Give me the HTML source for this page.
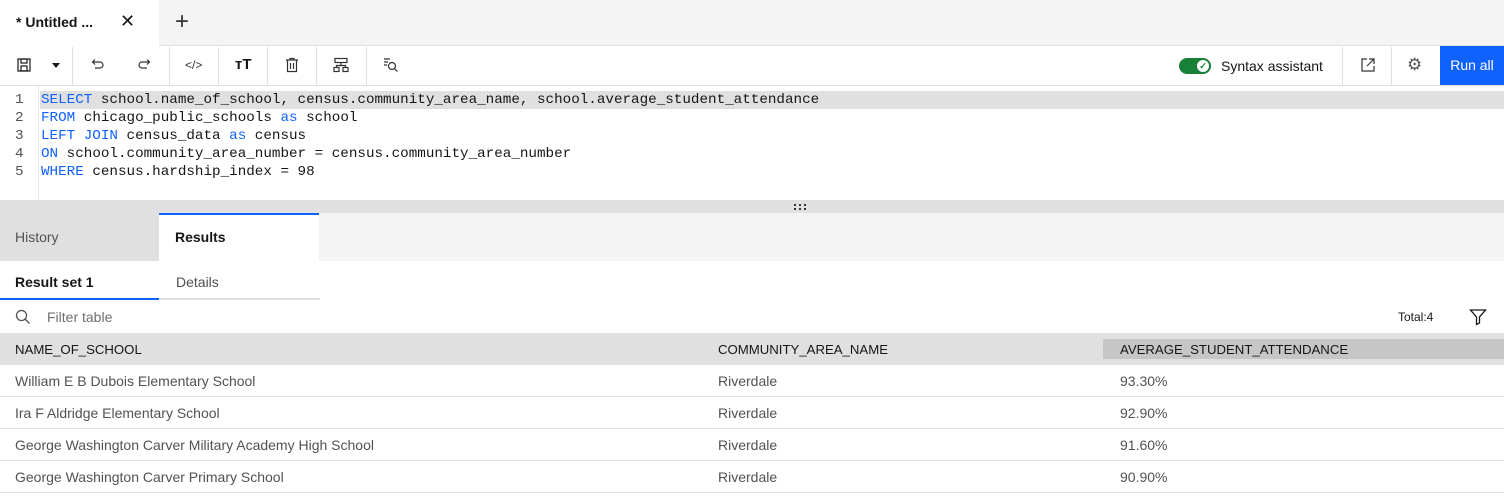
<!DOCTYPE html><html><head><style>
*{margin:0;padding:0;box-sizing:border-box}
body{width:1504px;height:498px;overflow:hidden;background:#fff;font-family:"Liberation Sans",sans-serif;color:#161616;position:relative}
.a{position:absolute}
.mono{font-family:"Liberation Mono",monospace;font-size:14.25px;white-space:pre;color:#161616}
.kw{color:#0f62fe}
.ico{position:absolute;top:57px}
.sep{position:absolute;top:47px;width:1px;height:38px;background:#e0e0e0}
.cell{position:absolute;font-size:14px;color:#525252}
.hd{position:absolute;top:342px;font-size:13.2px;color:#161616}
.row{position:absolute;left:0;width:1504px;height:32px;border-bottom:1px solid #e0e0e0}
</style></head><body>
<div class="a" style="left:0;top:0;width:1504px;height:46px;background:#f4f4f4;border-bottom:1px solid #e0e0e0"></div>
<div class="a" style="left:0;top:0;width:159px;height:46px;background:#fff"></div>
<div class="a" style="left:16px;top:14px;font-size:14px;font-weight:bold">* Untitled ...</div>
<div class="a" style="left:120px;top:11px;font-size:18px">✕</div>
<div class="a" style="left:175px;top:8px;font-size:24px;color:#333">+</div>
<div class="a" style="left:0;top:85px;width:1504px;height:1px;background:#e0e0e0"></div>
<svg class="ico" style="left:16px" width="16" height="16" viewBox="0 0 16 16" fill="none" stroke="#161616" stroke-width="1.2"><rect x="2" y="2" width="12" height="12"/><rect x="5" y="2" width="6" height="4"/><rect x="5" y="9" width="6" height="5"/></svg>
<div class="a" style="left:52px;top:63px;width:0;height:0;border-left:4.5px solid transparent;border-right:4.5px solid transparent;border-top:5px solid #161616"></div>
<div class="sep" style="left:72px"></div>
<svg class="ico" style="left:89px" width="16" height="16" viewBox="0 0 16 16" fill="none" stroke="#333" stroke-width="1.2"><path d="M4 5h7a3 3 0 0 1 0 6H6M6 2.5L3.5 5 6 7.5"/></svg>
<svg class="ico" style="left:137px" width="16" height="16" viewBox="0 0 16 16" fill="none" stroke="#333" stroke-width="1.2"><path d="M12 5H5a3 3 0 0 0 0 6h5M10 2.5L12.5 5 10 7.5"/></svg>
<div class="sep" style="left:169px"></div>
<div class="a" style="left:185px;top:58px;font-size:12px;color:#333">&lt;/&gt;</div>
<div class="sep" style="left:218px"></div>
<div class="a" style="left:235px;top:56px;font-size:15px;font-weight:bold">тT</div>
<div class="sep" style="left:267px"></div>
<svg class="ico" style="left:284px" width="16" height="16" viewBox="0 0 16 16" fill="none" stroke="#333" stroke-width="1.2"><path d="M2 3h12M6 3V1.5h4V3M3.5 3v11.5h9V3M6.5 6v6M9.5 6v6"/></svg>
<div class="sep" style="left:316px"></div>
<svg class="ico" style="left:333px" width="16" height="16" viewBox="0 0 16 16" fill="none" stroke="#333" stroke-width="1.2"><rect x="2" y="1.5" width="12" height="4"/><rect x="1" y="10.5" width="5" height="4"/><rect x="10" y="10.5" width="5" height="4"/><path d="M8 5.5v3M3.5 10.5V8.5h9v2"/></svg>
<div class="sep" style="left:366px"></div>
<svg class="ico" style="left:383px" width="16" height="16" viewBox="0 0 16 16" fill="none" stroke="#333" stroke-width="1.2"><path d="M1 2h6M1 5h4M1 8h3"/><circle cx="9" cy="9" r="3.5"/><path d="M11.5 11.5l3 3"/></svg>
<div class="a" style="left:1179px;top:58px;width:32px;height:16px;border-radius:8px;background:#198038"></div>
<div class="a" style="left:1197px;top:60px;width:12px;height:12px;border-radius:6px;background:#fff;color:#198038;font-size:9px;text-align:center;line-height:12px;font-weight:bold">✓</div>
<div class="a" style="left:1221px;top:58px;font-size:14px">Syntax assistant</div>
<div class="sep" style="left:1342px"></div>
<svg class="ico" style="left:1360px" width="16" height="16" viewBox="0 0 16 16" fill="none" stroke="#333" stroke-width="1.2"><path d="M7 2H2v12h12V9M9 2h5v5M14 2L7 9"/></svg>
<div class="sep" style="left:1391px"></div>
<div class="a" style="left:1407px;top:55px;font-size:17px;color:#555">⚙</div>
<div class="a" style="left:1440px;top:46px;width:64px;height:39px;background:#0f62fe;color:#fff;font-size:14px;text-align:center;line-height:39px">Run all</div>
<div class="a" style="left:38px;top:86px;width:1px;height:114px;background:#e8e8e8"></div>
<div class="a" style="left:40px;top:91px;width:1464px;height:18px;background:#e0e0e0"></div>
<div class="a mono" style="left:15px;top:91px;line-height:18px;color:#525252">1
2
3
4
5</div>
<div class="a mono" style="left:41px;top:91px;line-height:18px"><span class="kw">SELECT</span> school.name_of_school, census.community_area_name, school.average_student_attendance
<span class="kw">FROM</span> chicago_public_schools <span class="kw">as</span> school
<span class="kw">LEFT JOIN</span> census_data <span class="kw">as</span> census
<span class="kw">ON</span> school.community_area_number = census.community_area_number
<span class="kw">WHERE</span> census.hardship_index = 98</div>
<div class="a" style="left:0;top:200px;width:1504px;height:13px;background:#e0e0e0"></div>
<svg class="a" style="left:793px;top:203px" width="14" height="8" viewBox="0 0 14 8" fill="#333"><rect x="1" y="1" width="2" height="2"/><rect x="6" y="1" width="2" height="2"/><rect x="11" y="1" width="2" height="2"/><rect x="1" y="5" width="2" height="2"/><rect x="6" y="5" width="2" height="2"/><rect x="11" y="5" width="2" height="2"/></svg>
<div class="a" style="left:0;top:213px;width:1504px;height:48px;background:#f4f4f4"></div>
<div class="a" style="left:0;top:213px;width:159px;height:48px;background:#e0e0e0"></div>
<div class="a" style="left:159px;top:213px;width:160px;height:48px;background:#fff;border-top:2px solid #0f62fe"></div>
<div class="a" style="left:15px;top:229px;font-size:14px;color:#525252">History</div>
<div class="a" style="left:175px;top:229px;font-size:14px;font-weight:bold">Results</div>
<div class="a" style="left:0;top:298px;width:320px;height:2px;background:#e0e0e0"></div>
<div class="a" style="left:0;top:298px;width:159px;height:2px;background:#0f62fe"></div>
<div class="a" style="left:15px;top:274px;font-size:14px;font-weight:bold">Result set 1</div>
<div class="a" style="left:176px;top:274px;font-size:14px;color:#525252">Details</div>
<svg class="a" style="left:15px;top:309px" width="16" height="16" viewBox="0 0 16 16" fill="none" stroke="#525252" stroke-width="1.3"><circle cx="6.5" cy="6.5" r="5"/><path d="M10 10l4.5 4.5"/></svg>
<div class="a" style="left:47px;top:309px;font-size:14px;color:#6f6f6f">Filter table</div>
<div class="a" style="left:1398px;top:310px;font-size:12px">Total:4</div>
<svg class="a" style="left:1469px;top:308px" width="18" height="18" viewBox="0 0 18 18" fill="none" stroke="#161616" stroke-width="1.3"><path d="M1.5 2h15l-6 7v6l-3 1.5V9z"/></svg>
<div class="a" style="left:0;top:333px;width:1504px;height:32px;background:#e0e0e0"></div>
<div class="a" style="left:1103px;top:339px;width:401px;height:20px;background:#c6c6c6"></div>
<div class="hd" style="left:15px">NAME_OF_SCHOOL</div>
<div class="hd" style="left:718px">COMMUNITY_AREA_NAME</div>
<div class="hd" style="left:1120px">AVERAGE_STUDENT_ATTENDANCE</div>
<div class="row" style="top:365px"></div><div class="row" style="top:397px"></div><div class="row" style="top:429px"></div><div class="row" style="top:461px"></div>
<div class="cell" style="left:15px;top:373px">William E B Dubois Elementary School</div><div class="cell" style="left:718px;top:373px">Riverdale</div><div class="cell" style="left:1120px;top:373px">93.30%</div>
<div class="cell" style="left:15px;top:405px">Ira F Aldridge Elementary School</div><div class="cell" style="left:718px;top:405px">Riverdale</div><div class="cell" style="left:1120px;top:405px">92.90%</div>
<div class="cell" style="left:15px;top:437px">George Washington Carver Military Academy High School</div><div class="cell" style="left:718px;top:437px">Riverdale</div><div class="cell" style="left:1120px;top:437px">91.60%</div>
<div class="cell" style="left:15px;top:469px">George Washington Carver Primary School</div><div class="cell" style="left:718px;top:469px">Riverdale</div><div class="cell" style="left:1120px;top:469px">90.90%</div>
</body></html>
